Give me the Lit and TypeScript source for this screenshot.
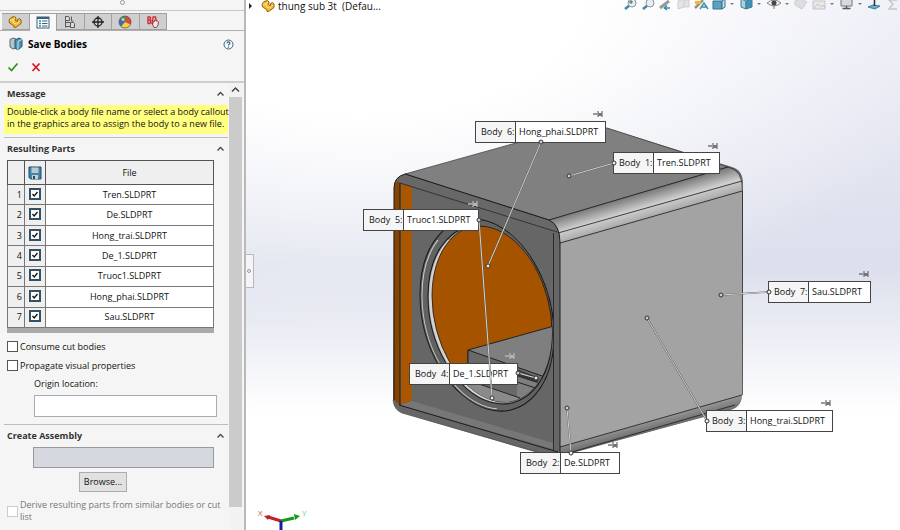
import { LitElement, html, svg, css } from "lit";
import { customElement, state } from "lit/decorators.js";
import { styleMap } from "lit/directives/style-map.js";

interface Callout {
  body: number;
  file: string;
  x: number;
  y: number;
  w: number;
}

const FILES = [
  "Tren.SLDPRT",
  "De.SLDPRT",
  "Hong_trai.SLDPRT",
  "De_1.SLDPRT",
  "Truoc1.SLDPRT",
  "Hong_phai.SLDPRT",
  "Sau.SLDPRT",
];

// Callout positions on the model canvas, relative to the viewport.
const CALLOUTS: Callout[] = [
  { body: 1, file: FILES[0], x: 367, y: 152, w: 107 },
  { body: 2, file: FILES[1], x: 274, y: 452, w: 100 },
  { body: 3, file: FILES[2], x: 460, y: 410, w: 127 },
  { body: 4, file: FILES[3], x: 163, y: 363, w: 109 },
  { body: 5, file: FILES[4], x: 117, y: 209, w: 116 },
  { body: 6, file: FILES[5], x: 229, y: 121, w: 131 },
  { body: 7, file: FILES[6], x: 522, y: 281, w: 103 },
];

// Leader lines: two end points each, in scene coordinates.
const LEADERS = [
  [569, 176, 614, 163],
  [567, 408, 571, 453],
  [647, 318, 707, 421],
  [518, 373, 536, 378],
  [479, 220, 492, 398],
  [541, 142, 488, 266],
  [721, 295, 769, 292],
];

const PINS: [number, number, string][] = [
  [598, 114, "#777"],
  [713, 146, "#777"],
  [864, 274, "#777"],
  [826, 403, "#777"],
  [613, 445, "#777"],
  [473, 204, "#b4b4b4"],
  [510, 356, "#b4b4b4"],
];

const partIcon = html`<svg width="16" height="14" viewBox="0 0 16 14" aria-hidden="true">
  <path d="M2 5 L4 2.500 L7.500 1.500 L9 3 L8.500 5.500 L10.500 6.500 L10.500 4.500 L12.500 3.500 L14 5 L14 8.500 L9.500 12 L7 12.500 L6.500 10.500 L2.500 8Z" fill="#f0b62c" stroke="#8f6510" stroke-width="1"/>
  <path d="M3 5.500 L6 5 L8 3M6 5 L6.500 8 L9.500 9 L13 6" fill="none" stroke="#ffe79a" stroke-width="1"/>
</svg>`;

const TABS = [
  { name: "Design tree", icon: partIcon },
  {
    name: "Property manager",
    icon: html`<svg width="14" height="13" viewBox="0 0 14 13" aria-hidden="true">
      <rect x="1" y="1" width="12" height="11" fill="#fff" stroke="#37647c"/>
      <rect x="1" y="1" width="12" height="2" fill="#37647c"/>
      <path d="M3 5h2M3 7.500h2M3 10h2" stroke="#2a86b5" stroke-width="1.500"/>
      <path d="M6 5h5.500M6 7.500h5.500M6 10h5.500" stroke="#37647c" stroke-width="1"/>
    </svg>`,
  },
  {
    name: "Configurations",
    icon: html`<svg width="14" height="14" viewBox="0 0 14 14" aria-hidden="true" fill="#dcdcdc" stroke="#5a5a5a" stroke-width="1">
      <path d="M2.500 1.500v11M2.500 7.500h5M2.500 11.500h5" fill="none"/>
      <path d="M2.500 1.500h3l1 1.500v2.500h-4z"/>
      <path d="M8.500 1.500v4.500h2"/>
      <path d="M7.500 7.500h3l1 1v4h-4z"/>
    </svg>`,
  },
  {
    name: "Dimensions",
    icon: html`<svg width="14" height="14" viewBox="0 0 14 14" aria-hidden="true">
      <circle cx="7" cy="7" r="4" fill="none" stroke="#222" stroke-width="1.300"/>
      <path d="M7 1v12M1 7h12" stroke="#222" stroke-width="1.300"/>
    </svg>`,
  },
  {
    name: "Appearances",
    icon: html`<svg width="14" height="14" viewBox="0 0 14 14" aria-hidden="true">
      <circle cx="7" cy="7" r="6" fill="#4468b0"/>
      <path d="M7 7 L2 3.600 A6 6 0 0 1 8 1Z" fill="#3f9a4d"/>
      <path d="M7 7 L8 1 A6 6 0 0 1 12.500 9.500Z" fill="#e2453a"/>
      <path d="M7 7 L12.500 9.500 A6 6 0 0 1 3 11.500Z" fill="#f5d33c"/>
      <circle cx="7" cy="7" r="6" fill="none" stroke="#555" stroke-width=".7"/>
      <circle cx="5" cy="4.500" r="1.500" fill="#fff" opacity=".6"/>
    </svg>`,
  },
  {
    name: "Motion",
    icon: html`<svg width="14" height="14" viewBox="0 0 14 14" aria-hidden="true">
      <path d="M2 2v6.500M4.500 2v6.500M1.500 2h3M2 5h2.500M1.500 8.500h3M7 2.500l-1 6M6.500 2h3l1 6" stroke="#d22c36" stroke-width="1.400" fill="none"/>
      <path d="M6 8.500l1 .5V6.500h1.500V5H10v1h1.500l1 1-.5 3-1.500 2.500H8z" fill="#f4e4e4" stroke="#8e3238" stroke-width=".9"/>
    </svg>`,
  },
];

const saveIcon = html`<svg width="14" height="14" viewBox="0 0 14 14" role="img" aria-label="Save">
  <path d="M1 1h12v12H2.500L1 11.500z" fill="#3f87a8" stroke="#1d4c66"/>
  <rect x="3.500" y="1.500" width="7" height="5.500" fill="#b9c9d1"/>
  <rect x="4" y="9" width="6" height="4" fill="#c7d2d8"/>
  <rect x="5" y="10" width="2" height="3" fill="#1d4c66"/>
</svg>`;

const lens = (x: number) => svg`
  <path d=${`M${x - 6} 9l5-4`} stroke="#3c86a6" stroke-width="2.500"/>
  <circle cx=${x + 1} cy="3" r="4" fill="#e6eff4" stroke="#8b979e"/>`;

const arrow = (x: number) => svg`<path d=${`M${x - 2} 3h4l-2 2z`} fill="#777"/>`;

@customElement("app-root")
export class AppRoot extends LitElement {
  @state() private checked = FILES.map(() => true);

  static styles = css`
    :host {
      display: flex;
      min-height: 100vh;
      overflow: hidden;
      font: 9px/12px "Open Sans", "Noto Sans", sans-serif;
      color: #111;
      background: #fff;
    }
    * { box-sizing: border-box; }
    svg { display: block; }
    button { font: inherit; color: inherit; padding: 0; border: 0; background: none; }
    .panel {
      flex: none;
      width: 246px;
      display: flex;
      flex-direction: column;
      background: #f5f5f5;
      border-right: 2px solid #b9b9b9;
      height: 100vh;
      overflow: hidden;
    }
    .grip { height: 11px; flex: none; border-bottom: 1px solid #c8c8c8; display: flex; justify-content: center; }
    .grip i { width: 5px; height: 5px; border: 1px solid #999; border-radius: 50%; }
    .tabs { display: flex; flex: none; height: 20px; padding: 2px 77px 0 2px; border-bottom: 1px solid #b0b0b0; }
    .tab {
      flex: 1;
      height: 17px;
      display: flex;
      align-items: center;
      justify-content: center;
      background: #cfcfcf;
      border: 1px solid #a0a0a0;
      border-left-width: 0;
    }
    .tab.on { background: #f8f8f8; border-bottom: 0; height: 18px; }
    .title { display: flex; align-items: center; flex: none; height: 26px; padding: 0 10px 0 9px; gap: 5px; }
    .title h1 { flex: 1; margin: 0; font-size: 10px; line-height: 16px; font-weight: 700; color: #000; }
    .actions { display: flex; flex: none; gap: 11px; height: 26px; padding: 3px 0 0 7px; border-bottom: 2px solid #cdcdcd; }
    .actions button { height: 14px; }
    .body { display: flex; flex: 1; min-height: 0; }
    .groups { flex: 1; min-width: 0; padding: 0 1px 0 4px; overflow: hidden; }
    .scroll { width: 13px; flex: none; margin-right: 2px; background: #f2f2f2; }
    .up { display: flex; width: 13px; height: 14px; align-items: center; justify-content: center; }
    .thumb { height: 410px; background: #cbcbcb; }
    .group { border-bottom: 1px solid #bdbdbd; }
    .head { display: flex; align-items: center; justify-content: space-between; height: 22px; padding: 0 3px; }
    h2 { margin: 0; font-size: 9px; line-height: 14px; font-weight: 700; color: #333; }
    .note { margin: 0 0 3px; padding: 1px 0 4px 3px; background: #ffff80; height: 29px; white-space: nowrap; }
    table { width: 207px; height: 168px; margin: 0 0 0 3px; border-collapse: collapse; table-layout: fixed; }
    th, td { border: 1px solid #777; padding: 0; text-align: center; font-weight: 400; line-height: 14px; }
    tbody td { background: #fff; }
    thead th, tbody th, tbody .pick { background: #efefef; }
    thead th { height: 24px; border-color: #555; }
    tbody th { text-align: right; padding-right: 2px; }
    .num { width: 17px; }
    .tick { width: 21px; }
    th svg { margin: 0 auto; }
    input { margin: 0; }
    .box {
      appearance: none;
      display: block;
      width: 11px;
      height: 11px;
      flex: none;
      background: #fff;
      border: 1px solid #555;
    }
    .pick .box { width: 12px; height: 12px; border: 2px solid #335163; margin: 0 auto 2px; }
    .pick label { display: grid; }
    .pick .box, .pick svg { grid-area: 1 / 1; }
    .pick svg { margin: 2px auto 0; pointer-events: none; }
    .foot { width: 207px; height: 5px; margin-left: 3px; background: #a9a9a9; }
    .check { display: flex; align-items: center; gap: 2px; height: 19px; margin-left: 3px; }
    .check.first { margin-top: 4px; }
    .indent { display: flex; flex-direction: column; margin: 3px 0 0 30px; gap: 5px; }
    .text { width: 183px; height: 22px; border: 1px solid #a8adb5; background: #fff; font: inherit; }
    .text.off { width: 181px; height: 21px; background: #d5d8de; border-color: #999; margin-left: 29px; display: block; }
    .origin { padding-bottom: 7px; }
    .browse { display: block; width: 48px; height: 20px; margin: 4px 0 6px 75px; background: #e1e1e1; border: 1px solid #adadad; }
    .check.off { color: #777; height: 26px; align-items: center; margin-bottom: 7px; }
    .check.off .box { border-color: #ccc; }
    .viewport {
      flex: 1;
      min-width: 0;
      position: relative;
      overflow: hidden;
      background:
        radial-gradient(ellipse 95% 62% at 18% 0, #fff 35%, rgba(255, 255, 255, 0) 100%),
        linear-gradient(#ecedf6 0, #dcdfec 50%, #fff 78%);
    }
    .scene { position: absolute; left: 0; top: 0; }
    .crumb { position: absolute; left: 2px; top: 0; display: flex; align-items: center; height: 12px; font-size: 10px; white-space: pre; }
    .crumb .part { margin: 0 2px 0 7px; }
    .callout {
      position: absolute;
      display: flex;
      height: 22px;
      border: 1px solid #444;
      background: #fff;
      line-height: 20px;
      white-space: pre;
      color: #111;
    }
    .callout .id { width: 40px; flex: none; padding-left: 5px; background: #f5f5f5; border-right: 1px solid #444; }
    .callout .name { padding-left: 3px; }
    .handle {
      position: absolute;
      left: -1px;
      top: 254px;
      width: 9px;
      height: 34px;
      background: #f5f5f5;
      border: 1px solid #b9b9b9;
      border-left: 0;
      display: flex;
      align-items: center;
      justify-content: center;
    }
    .handle i { width: 4px; height: 4px; border: 1px solid #999; border-radius: 50%; }
  `;

  private toggle(i: number) {
    this.checked = this.checked.map((v, n) => (n === i ? !v : v));
  }

  private head(title: string) {
    return html`<div class="head">
      <h2>${title}</h2>
      <button aria-label="Collapse ${title}">
        <svg width="9" height="8" viewBox="0 0 9 8"><path d="M1.500 5.500l3-3 3 3" fill="none" stroke="#444" stroke-width="1.300"/></svg>
      </button>
    </div>`;
  }

  private toolbar() {
    return svg`<g fill="none">
      ${lens(631)} ${lens(649)}
      <path d="M629 2h4m-2-2v4" stroke="#4d6470"/>
      <path d="M660 8l9-7" stroke="#999" stroke-width="3"/><path d="M664 8h6m-6 0l3-2.500m-3 2.500l3 2" stroke="#3290b5" stroke-width="1.500"/>
      <path d="M678 1l6-2v8l-6 2zM684 0h5v7h-5" fill="#e4e4e4" stroke="#cfcfcf"/>
      <path d="M695 8l8-8" stroke="#a09078" stroke-width="2.500"/><path d="M695 1h6v3h-6z" fill="#efb63c"/>
      <path d="M700 9l4-6 4 6m-6-2h4" stroke="#3a8fb4" stroke-width="1.500"/>
      <path d="M713 1h9v8h-9z" fill="#58a3c4" stroke="#3b7088"/><path d="M722 1l3-2v8l-3 2z" fill="#c6dfea" stroke="#3b7088"/>
      <path d="M741-1l5 2v8l-5-2z" fill="#a8d1e2" stroke="#487d94"/><path d="M746 1l6-2v8l-6 2z" fill="#3d93b8" stroke="#487d94"/>
      <path d="M767 3q7-6 14 0q-7 6-14 0z" fill="#eee" stroke="#888"/><circle cx="774" cy="3" r="2.500" fill="#444"/><path d="M774 6v3" stroke="#b55"/>
      <path d="M795 1l5-2 7 3-5 7-7-4z" fill="#dedede" stroke="#cfcfcf"/>
      <path d="M813 1h12v8h-12zM813 9l5-5 3 3 2-2 2 3" fill="#e8e8e8" stroke="#c4c4c4"/>
      <path d="M841-2h11v8h-11z" fill="#d5dadd" stroke="#777"/><path d="M846.500 6v2m-4 .5h8" stroke="#555" stroke-width="1.500"/>
      <path d="M868 7l5-2 7 1-5 3z" fill="#62b3d3" stroke="#3b819e"/><path d="M874.500-1v7" stroke="#333" stroke-width="1.500"/>
      <path d="M897 0h-8l4 4-4 5h8" stroke="#c6c6c6" stroke-width="1.500"/>
      ${[732, 759, 787, 832, 860].map(arrow)}
    </g>`;
  }

  private model() {
    return svg`
      <defs>
        <linearGradient id="bevel" gradientUnits="userSpaceOnUse" x1="640" y1="193" x2="647" y2="217">
          <stop offset="0" stop-color="#777"/><stop offset=".6" stop-color="#cfcfcf"/><stop offset="1" stop-color="#adadad"/>
        </linearGradient>
        <linearGradient id="under" gradientUnits="userSpaceOnUse" x1="640" y1="422" x2="644" y2="437">
          <stop offset="0" stop-color="#999"/><stop offset="1" stop-color="#5e5e5e"/>
        </linearGradient>
        <clipPath id="hole"><ellipse rx="60" ry="86" transform="matrix(1 .3 0 1 492 314)"/></clipPath>
        <clipPath id="front"><path d="M394 170H553V460H394z"/></clipPath>
        <clipPath id="rim"><path d="M415 240H450L500 420H415z"/></clipPath>
      </defs>
      <path d="M394 188Q394 178 402 175L600 128H607L732 167Q743 170 743 184L742 396Q741 406 733 409L562 455H545L402 413Q394 410 393 400Z" fill="#666"/>
      <path d="M405 174L516 143 600 128H607L728 167 560 217 549 220Z" fill="#808080" stroke="#444" stroke-width=".8"/>
      <path d="M549 220L728 167Q743 170 743 191L560 243Q559 226 549 220Z" fill="url(#bevel)"/>
      <path d="M560 243L742 191V396L560 447Z" fill="#a3a3a3"/>
      <path d="M560 447L742 395Q741 406 733 409L565 455H560Z" fill="url(#under)"/>
      <path d="M394 188Q395 181 400 181V405L394 400Z" fill="#864400"/>
      <path d="M401 183L412 187V401L401 405Z" fill="#ab5700"/>
      <path d="M400 183Q396 179 405 174L549 220Q558 224 560 236Z" fill="#686868"/>
      <path d="M400 405L412 401 553 443V449Z" fill="#777"/>
      <g stroke="#1c1c1c" fill="none">
        <path d="M394 400V188Q394 177 405 174L549 220Q560 225 560 243V452"/>
        <path d="M400 183V405M399 405L558 452"/>
        <path d="M400 183L557 232" stroke-width=".7"/>
        <path d="M553.500 233V450" stroke-width=".8"/>
        <path d="M549 220L728 167M558 233L742 181M560 243L742 191" stroke-width=".8"/>
        <path d="M560 447L742 395M572 452L735 405" stroke-width=".8"/>
        <path d="M728 167Q743 170 742.500 191V395" stroke-width=".7"/>
        <path d="M393 400Q394 410 402 413L545 454" stroke="#555" stroke-width=".7"/>
      </g>
      <g clip-path="url(#front)">
        <ellipse rx="67" ry="94" transform="matrix(1 .3 0 1 487 315)" fill="#626262" stroke="#191919"/>
        <g clip-path="url(#rim)">
          <ellipse rx="65" ry="92" transform="matrix(1 .3 0 1 487 315)" fill="none" stroke="#c9c9c9"/>
        </g>
        <ellipse rx="62" ry="87" transform="matrix(1 .3 0 1 490 315)" fill="#909090" stroke="#191919"/>
        <g clip-path="url(#rim)">
          <ellipse rx="61" ry="86" transform="matrix(1 .3 0 1 490 315)" fill="#d4d4d4"/>
        </g>
        <ellipse rx="60" ry="86" transform="matrix(1 .3 0 1 492 314)" fill="#a65300" stroke="#222" stroke-width=".8"/>
      </g>
      <g clip-path="url(#hole)" stroke="#222" stroke-width="1">
        <path d="M468 350L554 326V420H468Z" fill="#7f7f7f"/>
        <path d="M468 350L543 376 538 383 517 377V398L468 380Z" fill="#696969" stroke="none"/>
        <path d="M468 350V385M468 350L545 377M517 370L538 378" fill="none"/>
        <path d="M517 374L538 381" stroke="#333" stroke-width="4"/>
        <path d="M465 380L482 385 520 398 510 410 460 400Z" fill="#8a8a8a"/>
        <path d="M517 382L548 392" fill="none"/>
      </g>`;
  }

  private pin([x, y, c]: [number, number, string]) {
    return svg`<path d=${`M${x - 5} ${y}h4M${x} ${y - 3}v6M${x + 4} ${y - 3}v6`} fill="none" stroke=${c} stroke-width="1.300"/>
      <rect x=${x} y=${y - 1} width="4" height="3" fill=${c}/>`;
  }

  render() {
    return html`
      <aside class="panel">
        <div class="grip"><i></i></div>
        <nav class="tabs">
          ${TABS.map((t, i) => html`<button class="tab ${i === 1 ? "on" : ""}" aria-label=${t.name}>${t.icon}</button>`)}
        </nav>
        <div class="title">
          <svg width="14" height="14" viewBox="0 0 14 14" aria-hidden="true">
            <path d="M1 2.500l3-1.500 3 1v9l-3 1-3-2z" fill="#b8c3c9" stroke="#556a76"/>
            <path d="M6 3l4-2 3 1.500v7L9 13l-3-2z" fill="#4b93b5" stroke="#24526b"/>
            <path d="M9 4.500V13M9 4.500l4-2" stroke="#cfe4ee" fill="none"/>
          </svg>
          <h1>Save Bodies</h1>
          <button aria-label="Help">
            <svg width="11" height="11" viewBox="0 0 11 11">
              <circle cx="5.500" cy="5.500" r="4.500" fill="#f8fbfd" stroke="#386583"/>
              <path d="M4 4.300Q4 2.900 5.500 2.900T7 4.300Q7 5 5.500 5.700V6.500M5.500 7.500v1.200" fill="none" stroke="#2c5f80" stroke-width="1.100"/>
            </svg>
          </button>
        </div>
        <div class="actions">
          <button aria-label="OK"><svg width="12" height="12" viewBox="0 0 12 12"><path d="M1.500 6.500l3 3 6-7" fill="none" stroke="#2f9315" stroke-width="1.700"/></svg></button>
          <button aria-label="Cancel"><svg width="12" height="12" viewBox="0 0 12 12"><path d="M2.500 2.500l7 7.500M9.500 2.500L2.500 10" fill="none" stroke="#d3171e" stroke-width="1.700"/></svg></button>
        </div>
        <div class="body">
          <div class="groups">
            <section class="group">
              ${this.head("Message")}
              <p class="note">Double-click a body file name or select a body callout<br />in the graphics area to assign the body to a new file.</p>
            </section>
            <section class="group origin">
              ${this.head("Resulting Parts")}
              <table>
                <thead>
                  <tr><th class="num"></th><th class="tick">${saveIcon}</th><th>File</th></tr>
                </thead>
                <tbody>
                  ${FILES.map(
                    (f, i) => html`<tr>
                      <th scope="row">${i + 1}</th>
                      <td class="pick"><label>
                        <input class="box" type="checkbox" aria-label="Save ${f}" .checked=${this.checked[i]} @change=${() => this.toggle(i)} />
                        ${this.checked[i]
                          ? html`<svg width="8" height="8" viewBox="0 0 8 8"><path d="M1.500 4l1.700 2 3.300-4" fill="none" stroke="#111" stroke-width="1.300"/></svg>`
                          : ""}
                      </label></td>
                      <td>${f}</td>
                    </tr>`
                  )}
                </tbody>
              </table>
              <div class="foot"></div>
              <label class="check first"><input class="box" type="checkbox" />Consume cut bodies</label>
              <label class="check"><input class="box" type="checkbox" />Propagate visual properties</label>
              <div class="indent">
                <label for="origin">Origin location:</label>
                <input class="text" id="origin" type="text" />
              </div>
            </section>
            <section class="group">
              ${this.head("Create Assembly")}
              <input class="text off" type="text" aria-label="Assembly file" disabled />
              <button class="browse">Browse...</button>
              <label class="check off"><input class="box" type="checkbox" disabled /><span>Derive resulting parts from similar bodies or cut list</span></label>
            </section>
          </div>
          <div class="scroll">
            <button class="up" aria-label="Scroll up"><svg width="9" height="8" viewBox="0 0 9 8"><path d="M1 5.500l3.500-3.500L8 5.500" fill="none" stroke="#444" stroke-width="1.500"/></svg></button>
            <div class="thumb"></div>
          </div>
        </div>
      </aside>
      <main class="viewport">
        <svg class="scene" width="654" height="530" viewBox="246 0 654 530" aria-hidden="true">
          ${this.toolbar()} ${this.model()}
        </svg>
        <div class="crumb">
          <svg width="5" height="8" viewBox="0 0 5 8"><path d="M1 1l3 3-3 3z" fill="#222"/></svg>
          <span class="part">${partIcon}</span>
          <span>thung sub 3t  (Defau...</span>
        </div>
        ${CALLOUTS.map(
          (c) => html`<div class="callout" style=${styleMap({ left: `${c.x}px`, top: `${c.y}px`, width: `${c.w}px` })}><span class="id">Body  ${c.body}:</span><span class="name">${c.file}</span></div>`
        )}
        <svg class="scene" width="654" height="530" viewBox="246 0 654 530" aria-hidden="true">
          ${LEADERS.map(
            ([a, b, c, d]) => svg`
              <path d=${`M${a} ${b}L${c} ${d}`} stroke="#555" stroke-width="1.600"/>
              <path d=${`M${a} ${b}L${c} ${d}`} stroke="#d6d4cb" stroke-width="1"/>
              <circle cx=${a} cy=${b} r="2" fill="#ccc" stroke="#333"/>
              <circle cx=${c} cy=${d} r="2" fill="#eee" stroke="#333"/>`
          )}
          ${PINS.map((p) => this.pin(p))}
          <path d="M281 521L268 517" stroke="#c01f28" stroke-width="3"/><path d="M264 516l6-1-2 5z" fill="#c01f28"/>
          <path d="M281 521L294 518" stroke="#129a1c" stroke-width="3"/><path d="M300 516l-6-2 1 6z" fill="#129a1c"/>
          <path d="M281 521V530" stroke="#1a1aa8" stroke-width="3"/>
          <text x="258" y="516" font-size="8" fill="#e04a4a">X</text>
          <text x="302" y="516" font-size="8" fill="#5fd060">Y</text>
        </svg>
        <div class="handle"><i></i></div>
      </main>
    `;
  }
}
